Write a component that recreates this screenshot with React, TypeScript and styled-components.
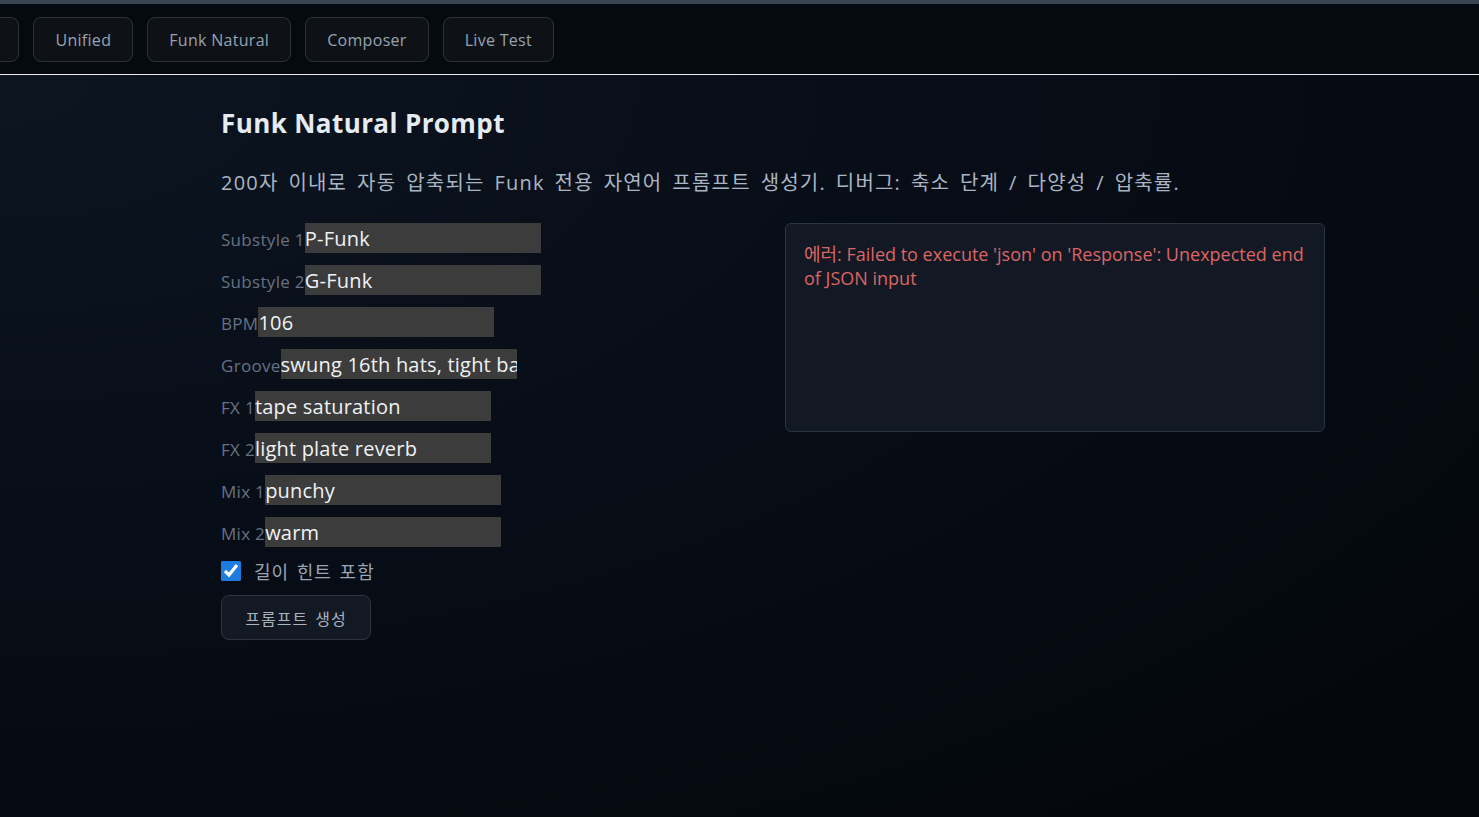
import React, { useLayoutEffect, useRef } from "react";
import styled, { createGlobalStyle } from "styled-components";

const GlobalStyle = createGlobalStyle`
    * {
        box-sizing: border-box;
    }
    html, body {
        margin: 0;
        padding: 0;
        height: 100%;
    }
    body {
        font-family: "Open Sans", "Noto Sans CJK KR", sans-serif;
        background: #05080f;
        color: #e6ebf2;
    }
`;

const tabs = ["Home", "Unified", "Funk Natural", "Composer", "Live Test"];

const fields = [
    { label: "Substyle 1", value: "P-Funk" },
    { label: "Substyle 2", value: "G-Funk" },
    { label: "BPM", value: "106" },
    { label: "Groove", value: "swung 16th hats, tight bass" },
    { label: "FX 1", value: "tape saturation" },
    { label: "FX 2", value: "light plate reverb" },
    { label: "Mix 1", value: "punchy" },
    { label: "Mix 2", value: "warm" },
];

const App = () => {
    const navRef = useRef<HTMLDivElement>(null);
    const firstRef = useRef<HTMLButtonElement>(null);

    // the tab strip is scrolled so that only the edge of the first tab shows
    useLayoutEffect(() => {
        const nav = navRef.current;
        const first = firstRef.current;
        if (nav && first) {
            nav.scrollLeft = first.offsetLeft + first.offsetWidth - 19;
        }
    }, []);

    return (
        <Page>
            <GlobalStyle />
            <TopStrip />
            <Nav ref={navRef}>
                <TabTrack>
                    {tabs.map((t, i) => (
                        <Tab key={t} ref={i === 0 ? firstRef : undefined}>
                            {t}
                        </Tab>
                    ))}
                </TabTrack>
            </Nav>
            <Main>
                <Title>Funk Natural Prompt</Title>
                <Description>
                    200자 이내로 자동 압축되는 Funk 전용 자연어 프롬프트 생성기. 디버그: 축소 단계 / 다양성 / 압축률.
                </Description>
                <Columns>
                    <Form>
                        {fields.map((f) => (
                            <Field key={f.label}>
                                <Label>{f.label}</Label>
                                <Input defaultValue={f.value} />
                            </Field>
                        ))}
                        <CheckRow>
                            <Check type="checkbox" defaultChecked />
                            길이 힌트 포함
                        </CheckRow>
                        <Button>프롬프트 생성</Button>
                    </Form>
                    <Output>
                        에러: Failed to execute 'json' on 'Response': Unexpected end of JSON input
                    </Output>
                </Columns>
            </Main>
        </Page>
    );
};

const Page = styled.div`
    min-height: 100vh;
    background: radial-gradient(
        ellipse at 0% 10%,
        #0c1520 0%,
        #080e18 40%,
        #03060b 100%
    );
`;

const TopStrip = styled.div`
    height: 4px;
    background: #3a4350;
`;

const Nav = styled.div`
    background: #050910;
    border-bottom: 1px solid #e8eaee;
    overflow-x: auto;
    scrollbar-width: none;
    &::-webkit-scrollbar {
        display: none;
    }
`;

const TabTrack = styled.div`
    display: flex;
    gap: 14px;
    width: max-content;
    padding: 13px 1479px 12px 33px;
`;

const Tab = styled.button`
    flex: 0 0 auto;
    height: 45px;
    padding: 0 21px;
    border: 1px solid #2c313a;
    border-radius: 8px;
    background: #0e1217;
    color: #97a2b1;
    font-family: "Open Sans", "Noto Sans CJK KR", sans-serif;
    font-size: 16px;
    letter-spacing: 0.3px;
`;

const Main = styled.main`
    padding: 28px 154px 40px 221px;
`;

const Title = styled.h1`
    margin: 0;
    font-size: 26px;
    font-weight: 700;
    color: #e6ebf2;
    line-height: 40px;
    letter-spacing: 0.4px;
`;

const Description = styled.p`
    margin: 25px 0 25px;
    font-size: 20px;
    line-height: 30px;
    color: #aab5c3;
    letter-spacing: 1.2px;
    word-spacing: 3.5px;
`;

const Columns = styled.div`
    display: grid;
    grid-template-columns: 1fr 1fr;
    gap: 24px;
    align-items: start;
`;

const Form = styled.div`
    display: flex;
    flex-direction: column;
    align-items: flex-start;
    gap: 12px;
`;

const Field = styled.label`
    display: flex;
    align-items: flex-end;
    height: 30px;
`;

const Label = styled.span`
    font-size: 17px;
    color: #667283;
    line-height: 22px;
    padding-bottom: 2px;
    letter-spacing: 0.3px;
`;

const Input = styled.input`
    width: 236px;
    height: 30px;
    padding: 0;
    border: none;
    outline: none;
    background: #3c3c3c;
    color: #f0f2f5;
    font-family: "Open Sans", "Noto Sans CJK KR", sans-serif;
    font-size: 20px;
    letter-spacing: 0.2px;
`;

const CheckRow = styled.label`
    display: flex;
    align-items: center;
    gap: 13px;
    margin-top: -1px;
    font-size: 18px;
    color: #9aa5b4;
    letter-spacing: 1px;
    word-spacing: 2px;
`;

const Check = styled.input`
    width: 20px;
    height: 20px;
    margin: 0;
    accent-color: #1e7be0;
`;

const Button = styled.button`
    margin-top: -1px;
    width: 150px;
    height: 45px;
    border: 1px solid #2e3540;
    border-radius: 8px;
    background: #121922;
    color: #a9b3c1;
    font-family: "Open Sans", "Noto Sans CJK KR", sans-serif;
    font-size: 16px;
    letter-spacing: 1px;
    word-spacing: 2px;
`;

const Output = styled.div`
    min-height: 209px;
    padding: 18px 18px;
    border: 1px solid #2a3443;
    border-radius: 6px;
    background: #131924;
    color: #db6565;
    font-size: 18px;
    line-height: 24px;
`;

export default App;
